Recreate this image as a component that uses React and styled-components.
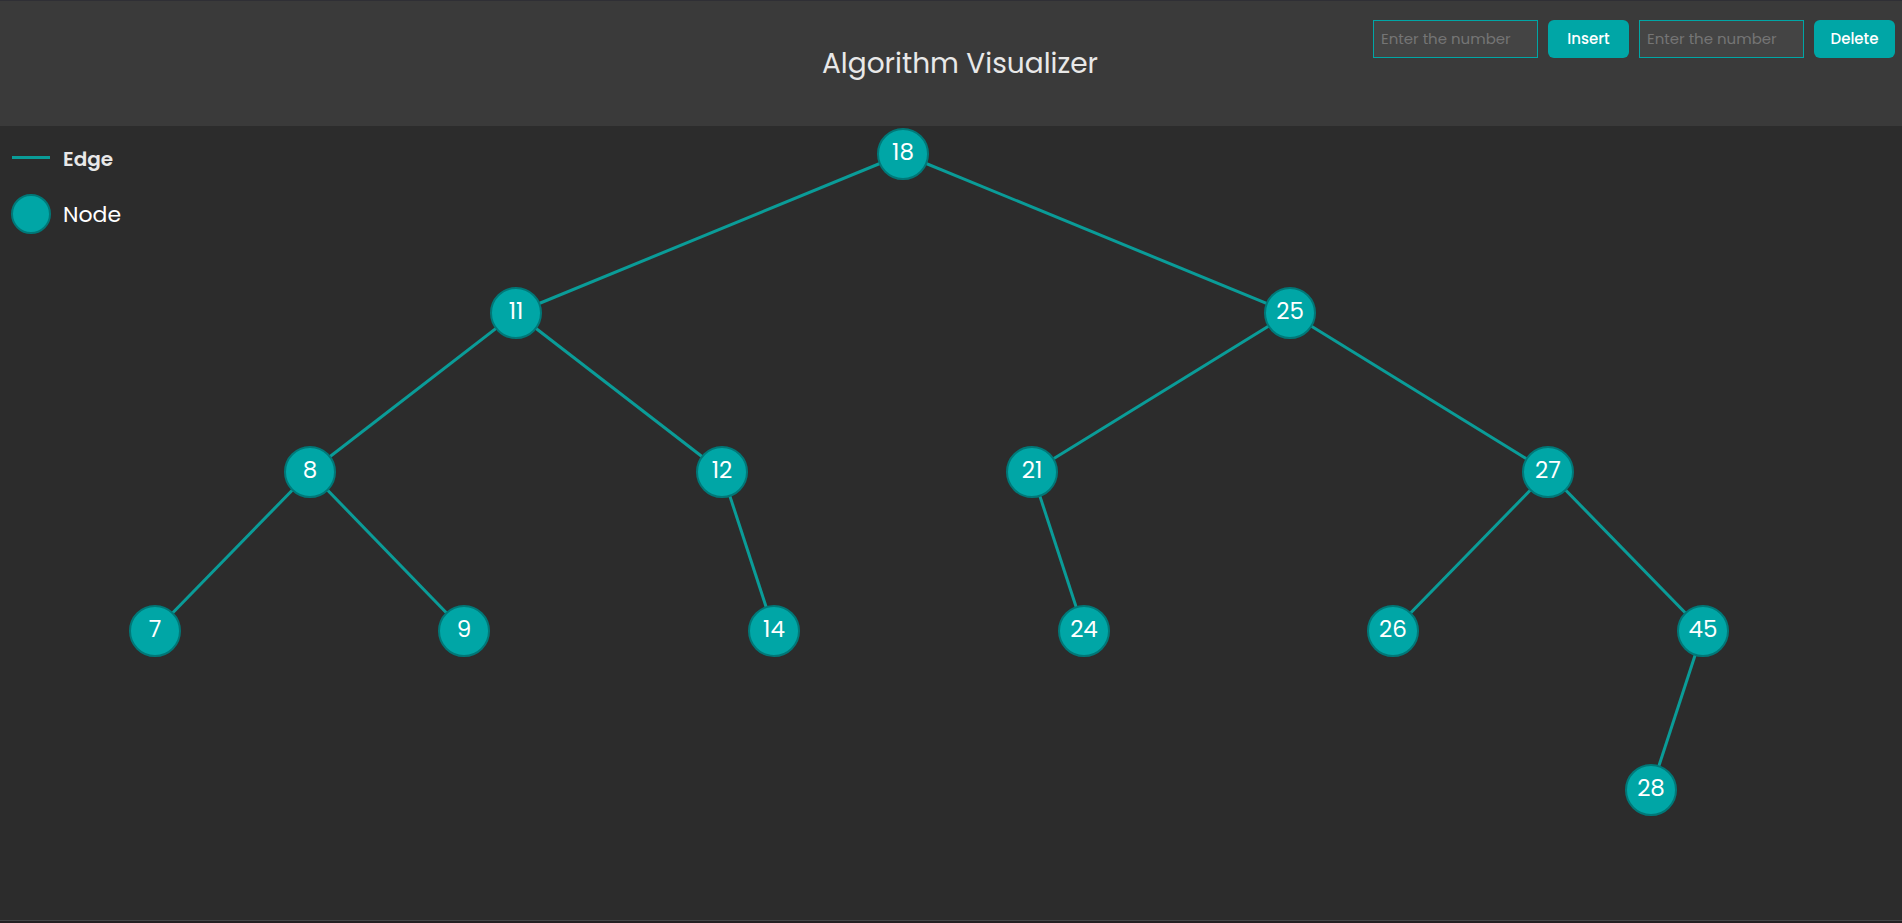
import React from "react";
import styled, { createGlobalStyle } from "styled-components";

const GlobalStyle = createGlobalStyle`
  * { box-sizing: border-box; }
  body {
    margin: 0;
    background: #2c2c2c;
    color: #ffffff;
    font-family: Poppins, Inter, sans-serif;
  }
`;

const Page = styled.div`
  min-height: 100vh;
  display: flex;
  flex-direction: column;
  border-top: 1px solid #2f2f35;
`;

const Header = styled.header`
  position: relative;
  display: flex;
  align-items: center;
  justify-content: center;
  height: 125px;
  padding-left: 18px;
  background: #3a3a3a;
`;

const Title = styled.h1`
  margin: 0;
  font-size: 28px;
  line-height: 40px;
  font-weight: 400;
  color: #e8e8e8;
`;

const Controls = styled.div`
  position: absolute;
  top: 19px;
  right: 7px;
  display: flex;
  gap: 10px;
`;

const Field = styled.form`
  display: flex;
  gap: 10px;
`;

const NumberInput = styled.input`
  width: 165px;
  height: 38px;
  padding: 0 7px 2px;
  border: 1px solid #00a6a6;
  background: #444444;
  color: #ffffff;
  font: inherit;
  font-size: 15px;
  &::placeholder { color: #757575; }
`;

const Button = styled.button`
  width: 81px;
  height: 38px;
  padding: 0 0 2px;
  border: 0;
  border-radius: 6px;
  background: #00a6a6;
  color: #ffffff;
  font: inherit;
  font-size: 15px;
  font-weight: 500;
`;

const Stage = styled.main`
  position: relative;
  flex: 1;
`;

const Legend = styled.ul`
  position: absolute;
  top: 16px;
  left: 11px;
  margin: 0;
  padding: 0;
  list-style: none;
  display: flex;
  flex-direction: column;
  gap: 18px;
`;

const LegendItem = styled.li`
  display: flex;
  align-items: center;
  gap: 12px;
  height: ${(p) => (p.$strong ? 34 : 40)}px;
  font-size: ${(p) => (p.$strong ? 20 : 22)}px;
  font-weight: ${(p) => (p.$strong ? 600 : 400)};
  color: ${(p) => (p.$strong ? "#e8e8e8" : "#ffffff")};
`;

const EdgeSample = styled.span`
  width: 38px;
  height: 3px;
  margin: 0 1px 4px;
  background: #0a9c98;
`;

const NodeSample = styled.span`
  width: 40px;
  height: 40px;
  border: 2px solid #007878;
  border-radius: 50%;
  background: #00a6a6;
`;

const Tree = styled.svg`
  display: block;
  width: 100%;
  height: auto;
`;

const Edge = styled.line`
  stroke: #0a9c98;
  stroke-width: 3;
`;

const Disc = styled.circle`
  fill: #00a6a6;
  stroke: #007878;
  stroke-width: 2;
`;

const Value = styled.text`
  fill: #ffffff;
  font-size: 23px;
  text-anchor: middle;
`;

const Footer = styled.footer`
  height: 3px;
  border-top: 1px solid #464648;
  background: #241f22;
`;

const ROW = 159;
const TOP = 28;

const nodes = [
  { value: 18, x: 903, level: 0 },
  { value: 11, x: 516, level: 1, parent: 18 },
  { value: 25, x: 1290, level: 1, parent: 18 },
  { value: 8, x: 310, level: 2, parent: 11 },
  { value: 12, x: 722, level: 2, parent: 11 },
  { value: 21, x: 1032, level: 2, parent: 25 },
  { value: 27, x: 1548, level: 2, parent: 25 },
  { value: 7, x: 155, level: 3, parent: 8 },
  { value: 9, x: 464, level: 3, parent: 8 },
  { value: 14, x: 774, level: 3, parent: 12 },
  { value: 24, x: 1084, level: 3, parent: 21 },
  { value: 26, x: 1393, level: 3, parent: 27 },
  { value: 45, x: 1703, level: 3, parent: 27 },
  { value: 28, x: 1651, level: 4, parent: 45 },
];

const yOf = (node) => TOP + node.level * ROW;
const parentOf = (node) => nodes.find((n) => n.value === node.parent);

function TreeView() {
  return (
    <Tree viewBox="0 0 1902 794" role="img" aria-label="Binary search tree">
      {nodes.filter((n) => n.parent).map((n) => {
        const p = parentOf(n);
        return <Edge key={n.value} x1={p.x} y1={yOf(p)} x2={n.x} y2={yOf(n)} />;
      })}
      {nodes.map((n) => (
        <g key={n.value}>
          <Disc cx={n.x} cy={yOf(n)} r="25" />
          <Value x={n.x} y={yOf(n) + 6}>{n.value}</Value>
        </g>
      ))}
    </Tree>
  );
}

function NumberField({ action }) {
  return (
    <Field onSubmit={(e) => e.preventDefault()}>
      <NumberInput type="text" inputMode="numeric" placeholder="Enter the number" aria-label={`Number to ${action.toLowerCase()}`} />
      <Button type="submit">{action}</Button>
    </Field>
  );
}

export default function App() {
  return (
    <Page>
      <GlobalStyle />
      <Header>
        <Title>Algorithm Visualizer</Title>
        <Controls>
          <NumberField action="Insert" />
          <NumberField action="Delete" />
        </Controls>
      </Header>
      <Stage>
        <TreeView />
        <Legend>
          <LegendItem $strong><EdgeSample />Edge</LegendItem>
          <LegendItem><NodeSample />Node</LegendItem>
        </Legend>
      </Stage>
      <Footer />
    </Page>
  );
}
